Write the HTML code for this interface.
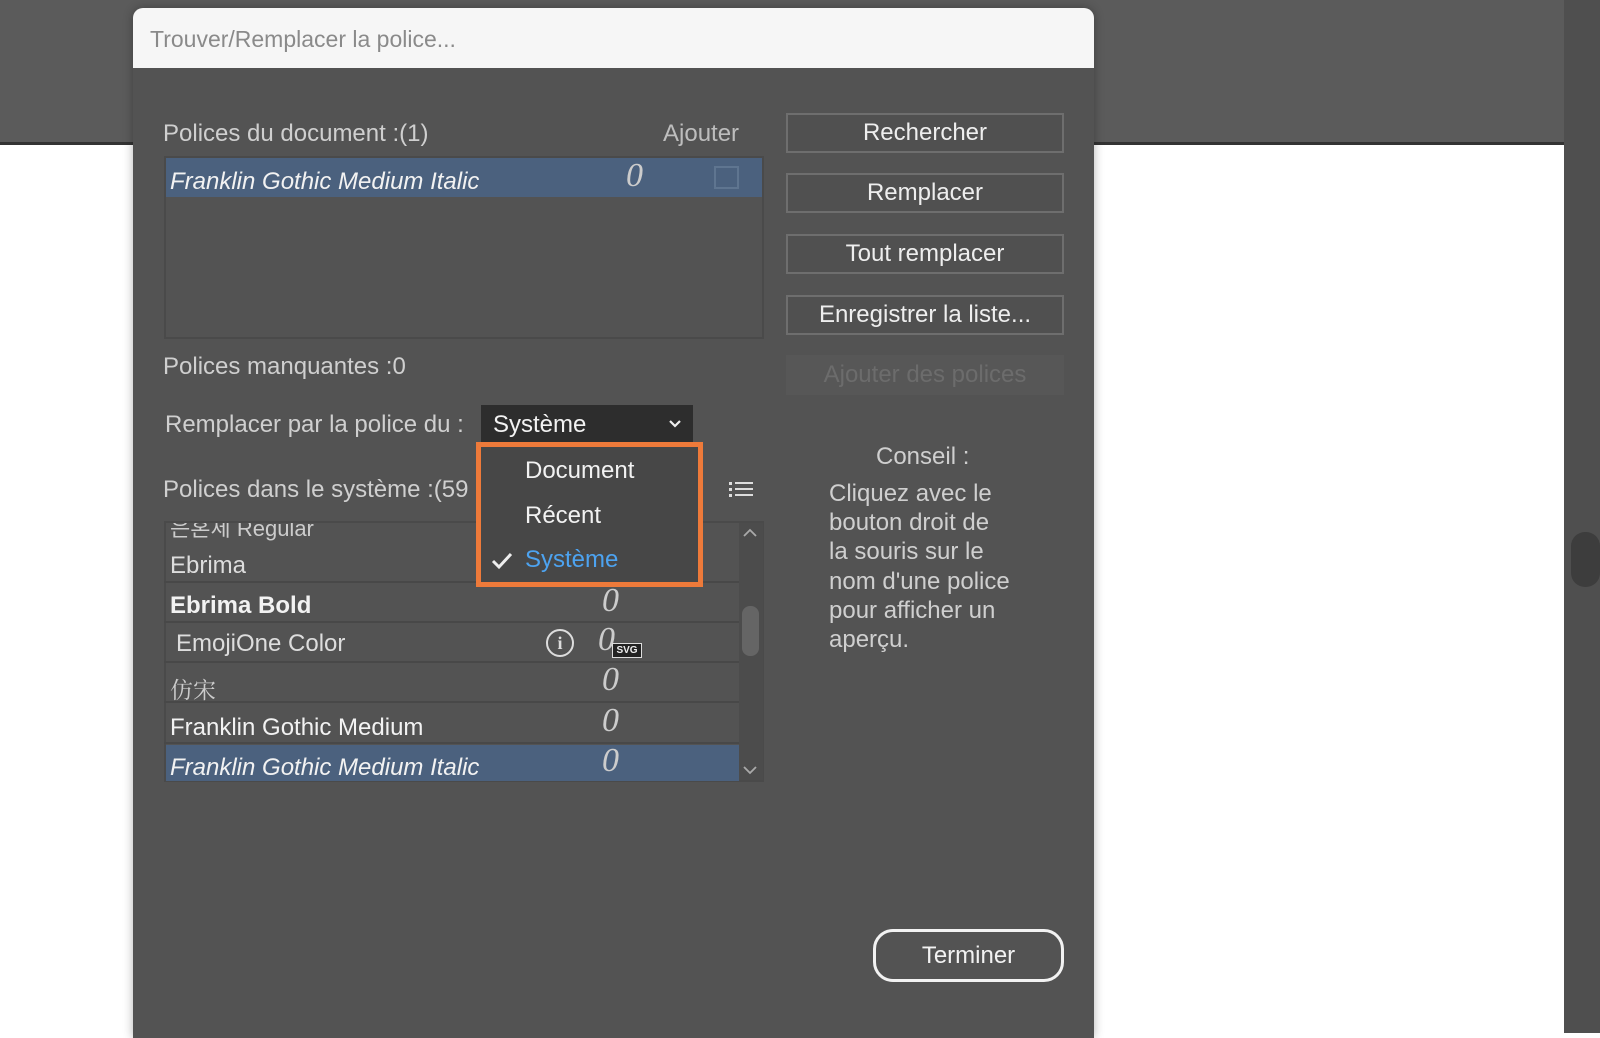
<!DOCTYPE html>
<html><head><meta charset="utf-8"><style>
*{margin:0;padding:0;box-sizing:border-box}
body{width:1600px;height:1033px;position:relative;overflow:hidden;background:#fff;font-family:"Liberation Sans Narrow","Liberation Sans","Noto Sans CJK SC",sans-serif;color:#ddd}
.a{position:absolute;white-space:nowrap}
.t{font-size:24px;line-height:30px}
.btn{position:absolute;left:786px;width:278px;height:40px;border:2px solid #6e6e6e;background:#505050;color:#eee;font-size:24px;text-align:center;line-height:36px}
.row{position:absolute;left:164px;width:575px;height:40px;border-bottom:2px solid #484848}
.o{position:absolute;font-family:"Liberation Serif",serif;font-style:italic;font-size:34px;color:#ccc}
</style></head><body>
<div class="a" style="left:0;top:0;width:1600px;height:145px;background:#5b5b5b;border-bottom:3px solid #333"></div>
<div class="a" style="left:1564px;top:0;width:36px;height:1033px;background:#4f4f4f"></div>
<div class="a" style="left:1571px;top:532px;width:29px;height:55px;background:#3d3d3d;border-radius:14px"></div>
<div class="a" style="left:133px;top:8px;width:961px;height:1030px;background:#535353;border-radius:10px 10px 0 0;box-shadow:0 0 10px rgba(0,0,0,.3)"></div>
<div class="a" style="left:133px;top:8px;width:961px;height:60px;background:#f6f6f6;border-radius:10px 10px 0 0"></div>
<div class="a t" style="left:150px;top:24px;color:#8a8a8a;font-size:23px">Trouver/Remplacer la police...</div>

<div class="a t" style="left:163px;top:119px;color:#cfcfcf">Polices du document :(1)</div>
<div class="a t" style="left:663px;top:119px;color:#bdbdbd">Ajouter</div>
<div class="a" style="left:164px;top:156px;width:600px;height:183px;border:2px solid #4a4a4a;background:#535353"></div>
<div class="a" style="left:166px;top:158px;width:596px;height:39px;background:#4b617e"></div>
<div class="a t" style="left:170px;top:167px;color:#f2f2f2;font-style:italic">Franklin Gothic Medium Italic</div>
<div class="o" style="left:626px;top:157px">0</div>
<div class="a" style="left:714px;top:166px;width:25px;height:23px;border:2px solid #5f7590"></div>

<div class="btn" style="top:113px">Rechercher</div>
<div class="btn" style="top:173px">Remplacer</div>
<div class="btn" style="top:234px">Tout remplacer</div>
<div class="btn" style="top:295px">Enregistrer la liste...</div>
<div class="btn" style="top:355px;border-color:#575757;background:#575757;color:#6c6c6c">Ajouter des polices</div>

<div class="a t" style="left:163px;top:352px;color:#cfcfcf">Polices manquantes :0</div>
<div class="a t" style="left:165px;top:410px;color:#cfcfcf">Remplacer par la police du :</div>
<div class="a" style="left:481px;top:405px;width:212px;height:39px;background:#2d2d2d"></div>
<div class="a t" style="left:493px;top:410px;color:#f2f2f2">Système</div>
<svg class="a" style="left:668px;top:419px" width="14" height="10"><path d="M2 2l5 5 5-5" stroke="#eee" stroke-width="2.2" fill="none"/></svg>

<div class="a t" style="left:163px;top:475px;color:#cfcfcf">Polices dans le système :(59</div>
<svg class="a" style="left:729px;top:481px" width="26" height="18"><g fill="#ddd"><rect x="0" y="1" width="3" height="3"/><rect x="0" y="7" width="3" height="3"/><rect x="0" y="13" width="3" height="3"/><rect x="6" y="1" width="18" height="2"/><rect x="6" y="7" width="18" height="2"/><rect x="6" y="13" width="18" height="2"/></g></svg>

<div class="a" style="left:164px;top:521px;width:600px;height:261px;border:2px solid #4a4a4a;background:#535353;overflow:hidden">
<div class="a" style="left:4px;top:-12px;font-size:22px;color:#ccc;font-family:'Liberation Sans','Noto Sans CJK KR',sans-serif">은혼체 Regular</div>
</div>
<div class="row" style="top:543px"></div>
<div class="a t" style="left:170px;top:551px">Ebrima</div>
<div class="row" style="top:583px"></div>
<div class="a t" style="left:170px;top:591px;font-weight:bold;color:#f2f2f2">Ebrima Bold</div><div class="o" style="left:602px;top:582px">0</div>
<div class="row" style="top:623px"></div>
<div class="a t" style="left:176px;top:629px">EmojiOne Color</div>
<div class="a" style="left:546px;top:629px;width:28px;height:28px;border:2px solid #ddd;border-radius:50%;text-align:center;font:bold 18px/24px 'Liberation Serif',serif;color:#ddd">i</div>
<div class="o" style="left:598px;top:621px">0</div>
<div class="a" style="left:612px;top:643px;width:30px;height:15px;background:#222;border:1px solid #ddd;font:bold 10px/13px 'Liberation Sans';color:#eee;text-align:center">SVG</div>
<div class="row" style="top:663px"></div>
<div class="a" style="left:170px;top:672px;font-size:23px;font-family:'Noto Serif CJK SC','Noto Sans CJK SC',serif;color:#ccc">仿宋</div><div class="o" style="left:602px;top:661px">0</div>
<div class="row" style="top:704px"></div>
<div class="a t" style="left:170px;top:713px;color:#f2f2f2">Franklin Gothic Medium</div><div class="o" style="left:602px;top:702px">0</div>
<div class="a" style="left:166px;top:745px;width:573px;height:36px;background:#4b617e"></div>
<div class="a t" style="left:170px;top:753px;color:#f2f2f2;font-style:italic">Franklin Gothic Medium Italic</div><div class="o" style="left:602px;top:742px">0</div>
<div class="a" style="left:739px;top:523px;width:24px;height:257px;background:#4c4c4c"></div>
<div class="a" style="left:742px;top:606px;width:17px;height:50px;background:#656565;border-radius:8px"></div>
<svg class="a" style="left:742px;top:528px" width="16" height="10"><path d="M2 8l6-6 6 6" stroke="#aaa" stroke-width="1.8" fill="none"/></svg>
<svg class="a" style="left:742px;top:765px" width="16" height="10"><path d="M2 2l6 6 6-6" stroke="#aaa" stroke-width="1.8" fill="none"/></svg>

<div class="a" style="left:476px;top:442px;width:227px;height:145px;background:#474747;border:5px solid #ee7a3a"></div>
<div class="a t" style="left:525px;top:456px;color:#f2f2f2">Document</div>
<div class="a t" style="left:525px;top:501px;color:#f2f2f2">Récent</div>
<svg class="a" style="left:490px;top:551px" width="24" height="20"><path d="M3 10l6 6 12-13" stroke="#eee" stroke-width="3" fill="none"/></svg>
<div class="a t" style="left:525px;top:545px;color:#4da3f0">Système</div>

<div class="a t" style="left:876px;top:442px;color:#cfcfcf">Conseil :</div>
<div class="a" style="left:829px;top:479px;font-size:24px;line-height:29.2px;color:#cfcfcf;white-space:normal;width:230px">Cliquez avec le<br>bouton droit de<br>la souris sur le<br>nom d'une police<br>pour afficher un<br>aperçu.</div>

<div class="a" style="left:873px;top:929px;width:191px;height:53px;border:3px solid #f2f2f2;border-radius:20px;text-align:center;font-size:24px;line-height:48px;color:#f2f2f2">Terminer</div>
</body></html>
